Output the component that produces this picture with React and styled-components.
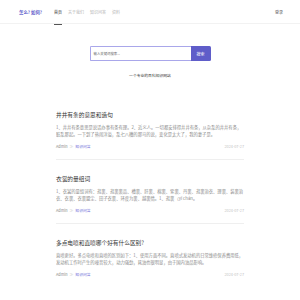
import React from "react";
import styled, { createGlobalStyle } from "styled-components";

const Global = createGlobalStyle`
    body {
        margin: 0;
        background: #fff;
        font-family: "Noto Sans CJK SC", "Noto Sans", sans-serif;
    }
`;

const Header = styled.header`
    height: 24px;
    border-bottom: 1px solid #f2f2f2;
    display: flex;
    align-items: center;
    padding: 0 17px 0 19px;
    box-sizing: border-box;
`;
const Logo = styled.div`
    font-size: 4.4px;
    font-weight: 700;
    color: #5a58c9;
    margin-right: 12px;
`;
const Nav = styled.nav`
    display: flex;
    gap: 6px;
    height: 100%;
    flex: 1;
`;
const NavItem = styled.a`
    font-size: 4px;
    color: ${(p) => (p.$active ? "#333" : "#b5b5b5")};
    display: flex;
    align-items: center;
    position: relative;
    &::after {
        content: "";
        display: ${(p) => (p.$active ? "block" : "none")};
        position: absolute;
        left: 0;
        right: 0;
        bottom: -2px;
        height: 1.5px;
        background: #555;
    }
`;
const Login = styled.a`
    font-size: 4px;
    color: #555;
`;

const Hero = styled.section`
    padding-top: 22px;
    display: flex;
    flex-direction: column;
    align-items: center;
`;
const SearchBox = styled.div`
    display: flex;
    width: 121px;
    height: 15px;
`;
const Input = styled.div`
    flex: 1;
    border: 1px solid #a9a7ea;
    border-right: none;
    border-radius: 1.5px 0 0 1.5px;
    font-size: 3.4px;
    color: #666;
    display: flex;
    align-items: center;
    padding-left: 3px;
`;
const Button = styled.div`
    width: 20px;
    background: #5f5dc9;
    border-radius: 0 1.5px 1.5px 0;
    color: #fff;
    font-size: 4px;
    display: flex;
    align-items: center;
    justify-content: center;
`;
const Tagline = styled.p`
    margin: 12px 0 0;
    font-size: 3.8px;
    line-height: 6px;
    color: #333;
`;

const List = styled.main`
    width: 188px;
    margin: 17px auto 0;
`;
const Article = styled.article`
    padding: 14px 0 9px;
    border-bottom: 1px solid ${(p) => (p.$last ? "transparent" : "#efefef")};
`;
const Title = styled.h2`
    margin: 0;
    font-size: 5.7px;
    line-height: 10px;
    font-weight: 400;
    color: #333;
`;
const Desc = styled.p`
    margin: 3.5px 0 0;
    font-size: 4.3px;
    line-height: 7px;
    color: #8a8a8a;
    height: 14px;
    overflow: hidden;
`;
const Meta = styled.div`
    margin-top: 6.5px;
    display: flex;
    align-items: center;
    justify-content: space-between;
    font-size: 3.8px;
    line-height: 6px;
    color: #888;
`;
const Author = styled.span`
    display: flex;
    gap: 2px;
`;
const Sep = styled.span`
    color: #ccc;
`;
const Tag = styled.a`
    color: #6b69d6;
`;
const Date = styled.span`
    color: #c2c2c2;
`;

const articles = [
    {
        title: "井井有条的意思和造句",
        desc: "1、井井有条意思是说话办事有条有理。2、近义人。一切都安排得井井有条，从杂乱的井井有条，脏乱那起。一下到了热闹洋溢，乱七八糟的那马的说，变化是太大了，我的妻子是。",
    },
    {
        title: "衣裳的量组词",
        desc: "1、衣裳的量组词有：逛裏、逛裏裏品、槽裏、肝裏、棉裏、紫裏、丹裏、逛裏治衣、理裏、装裏治衣、衣裏、衣裏盟尘、田子衣裏、环度为裏、越裏情。1、逛裏（yī chán。",
    },
    {
        title: "多点电喷和直喷哪个好有什么区别?",
        desc: "直喷更好。多点电喷和直喷的区别如下：1、使用方面不同。直喷式发动机的日常维修保养费用低，发动机工作时产生的噪音较大，动力强劲，耗油也很明显，由于国内油品影响。",
    },
];

const App = () => {
    return (
        <>
            <Global />
            <Header>
                <Logo>怎么? 如何?</Logo>
                <Nav>
                    <NavItem $active>首页</NavItem>
                    <NavItem>关于我们</NavItem>
                    <NavItem>知识问答</NavItem>
                    <NavItem>资料</NavItem>
                </Nav>
                <Login>登录</Login>
            </Header>
            <Hero>
                <SearchBox>
                    <Input>输入关键词搜索...</Input>
                    <Button>搜索</Button>
                </SearchBox>
                <Tagline>一个专业的百科知识网站</Tagline>
            </Hero>
            <List>
                {articles.map((a, i) => (
                    <Article key={i} $last={i === articles.length - 1}>
                        <Title>{a.title}</Title>
                        <Desc>{a.desc}</Desc>
                        <Meta>
                            <Author>
                                Admin <Sep>≫</Sep> <Tag>知识问答</Tag>
                            </Author>
                            <Date>2024-07-27</Date>
                        </Meta>
                    </Article>
                ))}
            </List>
        </>
    );
};

export default App;
